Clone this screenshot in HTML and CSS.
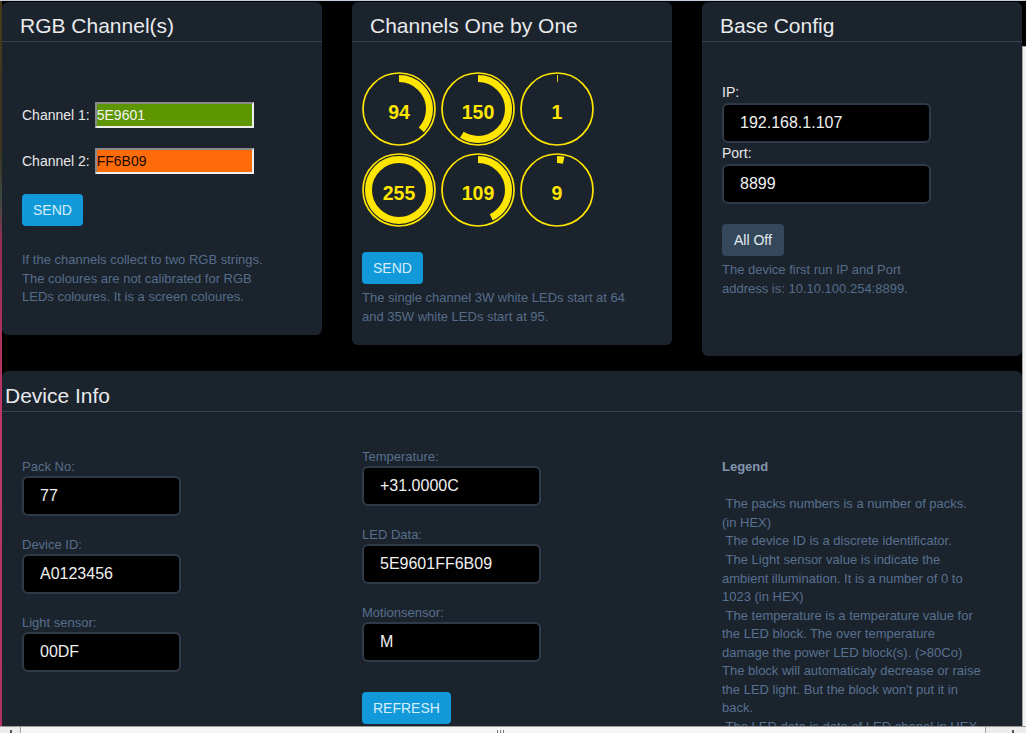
FILE: index.html
```html
<!DOCTYPE html>
<html lang="en">
<head>
<meta charset="utf-8">
<title>LED Controller</title>
<link rel="stylesheet" href="styles.css">
</head>
<body>
<div class="topline"></div>
<div class="page">
  <div class="row">
    <section class="card c1">
      <div class="card-head"><h2 class="card-title">RGB Channel(s)</h2></div>
      <div class="card-body">
        <div class="chan-row"><span class="chan-label">Channel 1:</span><input class="color-input" type="text" value="5E9601" style="background:#5e9601;color:#f2f2f2"></div>
        <div class="chan-row"><span class="chan-label">Channel 2:</span><input class="color-input" type="text" value="FF6B09" style="background:#ff6b09;color:#1a0a00"></div>
        <button class="btn btn-blue">SEND</button>
        <p class="note">If the channels collect to two RGB strings.<br>The coloures are not calibrated for RGB<br>LEDs coloures. It is a screen coloures.</p>
      </div>
    </section>

    <section class="card c2">
      <div class="card-head"><h2 class="card-title">Channels One by One</h2></div>
      <div class="card-body">
        <div class="knobs">
          <svg class="knob" viewBox="0 0 74 74" width="74" height="74"><circle class="ring" cx="37" cy="37" r="36"/><circle class="arc" cx="37" cy="37" r="30.5" stroke-dasharray="70.64 400" transform="rotate(-90 37 37)"/><text x="37" y="47">94</text></svg>
          <svg class="knob" viewBox="0 0 74 74" width="74" height="74"><circle class="ring" cx="37" cy="37" r="36"/><circle class="arc" cx="37" cy="37" r="30.5" stroke-dasharray="112.73 400" transform="rotate(-90 37 37)"/><text x="37" y="47">150</text></svg>
          <svg class="knob" viewBox="0 0 74 74" width="74" height="74"><circle class="ring" cx="37" cy="37" r="36"/><circle class="arc" cx="37" cy="37" r="30.5" stroke-dasharray="0.9 400" transform="rotate(-90 37 37)"/><text x="37" y="47">1</text></svg>
          <svg class="knob" viewBox="0 0 74 74" width="74" height="74"><circle class="ring" cx="37" cy="37" r="36"/><circle class="arc" cx="37" cy="37" r="30.5"/><text x="37" y="47">255</text></svg>
          <svg class="knob" viewBox="0 0 74 74" width="74" height="74"><circle class="ring" cx="37" cy="37" r="36"/><circle class="arc" cx="37" cy="37" r="30.5" stroke-dasharray="81.91 400" transform="rotate(-90 37 37)"/><text x="37" y="47">109</text></svg>
          <svg class="knob" viewBox="0 0 74 74" width="74" height="74"><circle class="ring" cx="37" cy="37" r="36"/><circle class="arc" cx="37" cy="37" r="30.5" stroke-dasharray="6.76 400" transform="rotate(-90 37 37)"/><text x="37" y="47">9</text></svg>
        </div>
        <button class="btn btn-blue btn-send2">SEND</button>
        <p class="note note-tight">The single channel 3W white LEDs start at 64<br>and 35W white LEDs start at 95.</p>
      </div>
    </section>

    <section class="card c3">
      <div class="card-head"><h2 class="card-title">Base Config</h2></div>
      <div class="card-body">
        <label class="cfg-label">IP:</label>
        <input class="dark-input cfg-input" type="text" value="192.168.1.107">
        <label class="cfg-label">Port:</label>
        <input class="dark-input cfg-input" type="text" value="8899">
        <button class="btn btn-grey">All Off</button>
        <p class="note note-tight">The device first run IP and Port<br>address is: 10.10.100.254:8899.</p>
      </div>
    </section>
  </div>

  <section class="card c4">
    <div class="card-head"><h2 class="card-title">Device Info</h2></div>
    <div class="card-body info-grid">
      <div class="col col1">
        <label class="field-label">Pack No:</label>
        <input class="dark-input in-narrow" type="text" value="77">
        <label class="field-label">Device ID:</label>
        <input class="dark-input in-narrow" type="text" value="A0123456">
        <label class="field-label">Light sensor:</label>
        <input class="dark-input in-narrow" type="text" value="00DF">
      </div>
      <div class="col col2">
        <label class="field-label">Temperature:</label>
        <input class="dark-input in-wide" type="text" value="+31.0000C">
        <label class="field-label">LED Data:</label>
        <input class="dark-input in-wide" type="text" value="5E9601FF6B09">
        <label class="field-label">Motionsensor:</label>
        <input class="dark-input in-wide" type="text" value="M">
        <button class="btn btn-blue btn-refresh">REFRESH</button>
      </div>
      <div class="col col3 legend">
        <b>Legend</b><br><br>
        &nbsp;The packs numbers is a number of packs.<br>
        (in HEX)<br>
        &nbsp;The device ID is a discrete identificator.<br>
        &nbsp;The Light sensor value is indicate the<br>
        ambient illumination. It is a number of 0 to<br>
        1023 (in HEX)<br>
        &nbsp;The temperature is a temperature value for<br>
        the LED block. The over temperature<br>
        damage the power LED block(s). (&gt;80Co)<br>
        The block will automaticaly decrease or raise<br>
        the LED light. But the block won't put it in<br>
        back.<br>
        &nbsp;The LED data is data of LED chanel in HEX<br>
      </div>
    </div>
  </section>
</div>

<div class="edge-left"></div>
<div class="vscroll"></div>
<div class="hscroll">
  <div class="hs-arrow hs-left"><span class="tick"></span></div>
  <div class="hs-thumb"><span class="grip"></span></div>
  <div class="hs-arrow hs-right"><span class="tick"></span></div>
</div>
</body>
</html>
```

FILE: styles.css
```css
html, body {
  margin: 0;
  height: 100%;
  overflow: hidden;
  background: #000;
}
body {
  font-family: "Liberation Sans", Arial, sans-serif;
  color: #e6e6e6;
}
.topline {
  height: 1px;
  background: #c3cedb;
}
.page {
  padding: 1px 0 0 2px;
}
.row {
  display: flex;
  gap: 30px;
  align-items: flex-start;
}
.card {
  background: #1b232d;
  border-radius: 6px;
  width: 320px;
}
.card-head {
  height: 39px;
  border-bottom: 1px solid #38434f;
  padding: 0 18px;
}
.card-title {
  margin: 0;
  padding-top: 12px;
  font-size: 21px;
  line-height: 24px;
  font-weight: normal;
  color: #e8eaec;
}

/* card 1 */
.c1 .card-body {
  padding: 60px 20px 28px;
}
.chan-row {
  display: flex;
  align-items: center;
  margin-bottom: 20px;
}
.chan-label {
  font-size: 14px;
  margin-right: 5px;
  color: #e8e8e8;
}
.color-input {
  width: 159px;
  height: 26px;
  box-sizing: border-box;
  border: 2px solid;
  border-color: #8a8a8a #eeeeee #eeeeee #8a8a8a;
  padding: 0;
  font-family: "Liberation Sans", Arial, sans-serif;
  font-size: 14px;
  outline: none;
}

.btn {
  display: block;
  height: 32px;
  padding: 0 11px;
  border: none;
  border-radius: 4px;
  font-family: "Liberation Sans", Arial, sans-serif;
  font-size: 14px;
  line-height: 32px;
  cursor: pointer;
}
.btn-blue {
  background: #1299d9;
  color: #d6eefc;
}
.btn-grey {
  background: #34475b;
  color: #e6ecf2;
  padding: 0 12px;
  margin-top: 20px;
}
.note {
  margin: 25px 0 0;
  font-size: 13px;
  line-height: 18.57px;
  color: #556d8a;
}
.note-tight {
  margin-top: 5px;
}

/* card 2 */
.c2 .card-body {
  padding: 30px 10px 19px;
}
.knobs {
  display: flex;
  flex-wrap: wrap;
  gap: 7px 5px;
  width: 232px;
}
.knob {
  display: block;
}
.knob .ring {
  fill: none;
  stroke: #ffe600;
  stroke-width: 1.7;
}
.knob .arc {
  fill: none;
  stroke: #ffe600;
  stroke-width: 7;
}
.knob text {
  fill: #ffe600;
  font-family: "Liberation Sans", Arial, sans-serif;
  font-weight: bold;
  font-size: 19.5px;
  text-anchor: middle;
}
.btn-send2 {
  margin-top: 25px;
}

/* card 3 */
.c3 .card-body {
  padding: 40px 20px 58px;
}
.cfg-label {
  display: block;
  font-size: 14px;
  line-height: 21px;
  color: #e8e8e8;
}
.dark-input {
  display: block;
  height: 40px;
  box-sizing: border-box;
  border: 2px solid #2e3a48;
  border-radius: 6px;
  background: #000;
  color: #f0f0f0;
  font-family: "Liberation Sans", Arial, sans-serif;
  font-size: 16px;
  padding: 0 16px;
  outline: none;
}
.cfg-input {
  width: 209px;
}

/* card 4 */
.c4 {
  width: 1020px;
  margin-top: 15px;
}
.c4 .card-head {
  padding-left: 3px;
  height: 40px;
}
.c4 .card-title {
  padding-top: 13px;
}
.info-grid {
  display: grid;
  grid-template-columns: 340px 360px 1fr;
  align-items: start;
  padding: 36px 20px 40px;
}
.col1, .col3 {
  margin-top: 10px;
}
.field-label {
  display: block;
  font-size: 13px;
  line-height: 18px;
  color: #586f8c;
}
.col .dark-input {
  margin-bottom: 20px;
}
.in-narrow {
  width: 159px;
}
.in-wide {
  width: 179px;
}
.btn-refresh {
  margin-top: 30px;
}
.legend {
  font-size: 13px;
  line-height: 18.57px;
  color: #587190;
  white-space: nowrap;
}
.legend b {
  color: #8296ae;
}

/* window chrome overlays */
.edge-left {
  position: fixed;
  left: 0;
  top: 1px;
  bottom: 0;
  width: 2px;
  background: linear-gradient(#4a3a1c 0, #3a3420 150px, #3c4a40 200px, #9a2a55 240px, #c0386a 420px, #b23262 700px);
}
.vscroll {
  position: fixed;
  left: 1022px;
  top: 46px;
  right: 0;
  bottom: 7px;
  background: #f0f0f0;
  border-left: 1px solid #a6a6a6;
  border-top: 1px solid #a6a6a6;
}
.hscroll {
  position: fixed;
  left: 0;
  right: 0;
  bottom: 0;
  height: 6px;
  border-top: 1px solid #9a9a9a;
  background: #ececec;
  display: flex;
}
.hs-arrow {
  position: relative;
}
.hs-left {
  width: 20px;
  border-right: 1px solid #a0a0a0;
}
.hs-right {
  width: 40px;
  border-left: 1px solid #a0a0a0;
}
.hs-thumb {
  flex: 1;
  position: relative;
  background: #f6f6f6;
}
.tick {
  position: absolute;
  top: 3px;
  width: 2px;
  height: 3px;
  background: #555;
}
.hs-left .tick { left: 10px; }
.hs-right .tick { left: 26px; }
.grip {
  position: absolute;
  left: 476px;
  top: 3px;
  width: 7px;
  height: 3px;
  background: repeating-linear-gradient(90deg, #777 0 1px, transparent 1px 3px);
}
```
